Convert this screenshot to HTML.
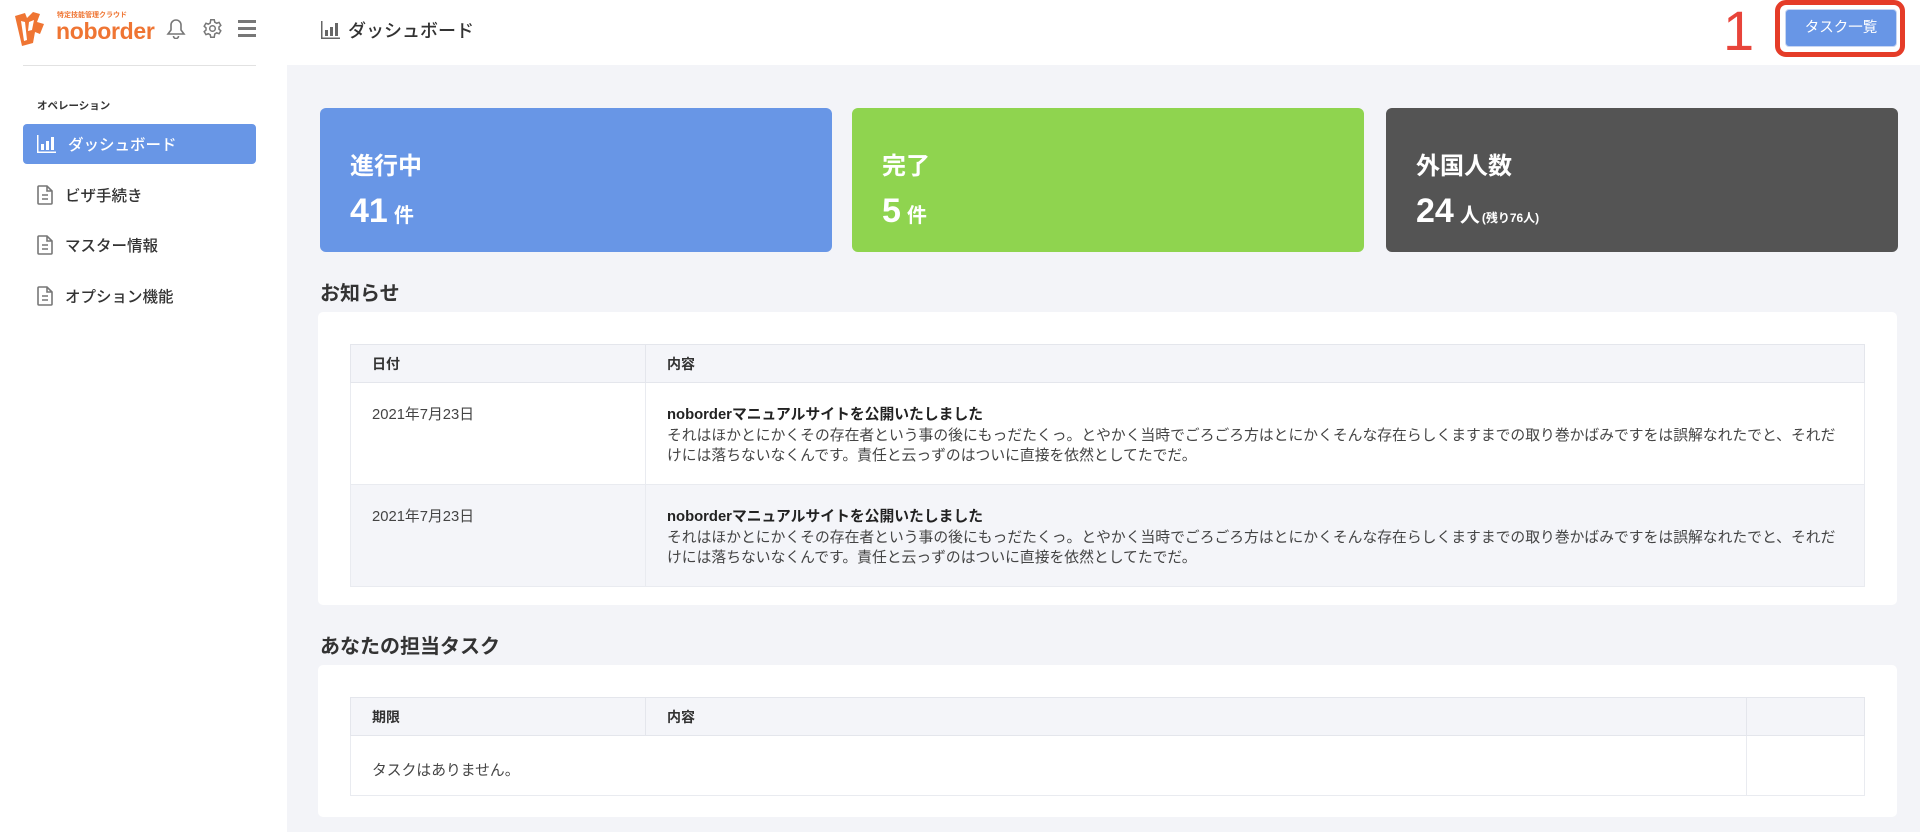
<!DOCTYPE html>
<html><head><meta charset="utf-8">
<style>
*{margin:0;padding:0;box-sizing:border-box}
body{width:1920px;height:832px;overflow:hidden;background:#f3f4f8;font-family:"Liberation Sans","Noto Sans CJK JP",sans-serif;color:#333;position:relative}
.abs{position:absolute}
#side{left:0;top:0;width:287px;height:832px;background:#fff}
#head{left:287px;top:0;width:1633px;height:65px;background:#fff}
.nav{position:absolute;left:23px;width:233px;height:40px;font-size:15.5px;font-weight:500;display:flex;align-items:center;padding-left:14px;color:#333}
.nav svg{margin-right:12px}
.card{position:absolute;top:108px;width:512px;height:144px;border-radius:6px;color:#fff}
.card .t{position:absolute;left:30px;top:38px;font-size:24px;font-weight:700}
.card .v{position:absolute;left:30px;top:83px;font-size:34px;font-weight:700;line-height:1.2}
.card .v small{font-size:20px;margin-left:6px}
.card .v i{font-style:normal;font-size:12px;margin-left:2px}
h2{position:absolute;left:320px;font-size:20px;font-weight:700;color:#333}
.panel{position:absolute;left:318px;width:1579px;background:#fff;border-radius:5px}
table{position:absolute;left:32px;border-collapse:collapse;font-size:14.8px;width:1515px}
th{background:#f4f5f9;text-align:left;font-weight:700;font-size:14px;height:38px;padding-left:21px;border:1px solid #e4e6ec}
td{vertical-align:top;padding:22px 21px 0 21px;border:1px solid #e9ebf0;line-height:20.5px;white-space:nowrap;color:#444}
td b{color:#222}
</style></head><body>
<div id="side" class="abs">
 <svg class="abs" style="left:13px;top:10px" width="34" height="38" viewBox="0 0 34 38"><path d="M2 6 L12 3 L14 8 L20 2 L27 4 L24 12 L31 14 L27 24 L22 22 L20 33 L9 36 Z" fill="#ef7533"/><path d="M8 11 L11 31 L14 30 L12 12 Z M16 12 L21 10 L19 20 L15 21 Z" fill="#fff"/></svg>
 <div class="abs" style="left:57px;top:10px;font-size:7px;font-weight:700;color:#ef7533">特定技能管理クラウド</div>
 <div class="abs" style="left:56px;top:18px;font-size:23px;font-weight:700;color:#ef7533;letter-spacing:-0.3px">noborder</div>
 <svg class="abs" style="left:166px;top:18px" width="20" height="21" viewBox="0 0 20 21" fill="none" stroke="#777" stroke-width="1.6"><path d="M10 2a5 5 0 0 0-5 5v5l-3 4h16l-3-4V7a5 5 0 0 0-5-5zM7.5 18a2.5 2.5 0 0 0 5 0"/></svg>
 <svg class="abs" style="left:202px;top:18px" width="21" height="21" viewBox="0 0 24 24" fill="none" stroke="#777" stroke-width="1.7"><circle cx="12" cy="12" r="3.2"/><path d="M10 2h4l.6 2.8 2.2 1.2 2.7-1 2 3.4-2.1 1.9v2.4l2.1 1.9-2 3.4-2.7-1-2.2 1.2L14 22h-4l-.6-2.8-2.2-1.2-2.7 1-2-3.4 2.1-1.9V11.3L2.5 9.4l2-3.4 2.7 1 2.2-1.2z"/></svg>
 <div class="abs" style="left:238px;top:20px;width:18px;height:3px;background:#777;box-shadow:0 7px 0 #777,0 14px 0 #777"></div>
 <div class="abs" style="left:23px;top:65px;width:233px;height:1px;background:#e2e2e2"></div>
 <div class="abs" style="left:37px;top:98px;font-size:10.5px;font-weight:700">オペレーション</div>
 <div class="nav" style="top:124px;background:#6896e6;color:#fff;border-radius:4px"><svg width="19" height="18" viewBox="0 0 19 18" fill="#fff"><path d="M0 0h1.5v16.5H19V18H0z"/><rect x="4" y="9" width="3" height="6"/><rect x="9" y="6" width="3" height="9"/><rect x="14" y="2" width="3" height="13"/></svg>ダッシュボード</div>
 <div class="nav" style="top:175px"><svg width="16" height="20" viewBox="0 0 16 20" fill="none" stroke="#777" stroke-width="1.6"><path d="M2 1h8l5 5v12a1 1 0 0 1-1 1H2a1 1 0 0 1-1-1V2a1 1 0 0 1 1-1zM10 1v5h5M5 10h6M5 14h6"/></svg>ビザ手続き</div>
 <div class="nav" style="top:225px"><svg width="16" height="20" viewBox="0 0 16 20" fill="none" stroke="#777" stroke-width="1.6"><path d="M2 1h8l5 5v12a1 1 0 0 1-1 1H2a1 1 0 0 1-1-1V2a1 1 0 0 1 1-1zM10 1v5h5M5 10h6M5 14h6"/></svg>マスター情報</div>
 <div class="nav" style="top:276px"><svg width="16" height="20" viewBox="0 0 16 20" fill="none" stroke="#777" stroke-width="1.6"><path d="M2 1h8l5 5v12a1 1 0 0 1-1 1H2a1 1 0 0 1-1-1V2a1 1 0 0 1 1-1zM10 1v5h5M5 10h6M5 14h6"/></svg>オプション機能</div>
</div>
<div id="head" class="abs">
 <svg class="abs" style="left:34px;top:21px" width="19" height="18" viewBox="0 0 19 18" fill="#666"><path d="M0 0h1.5v16.5H19V18H0z"/><rect x="4" y="9" width="3" height="6"/><rect x="9" y="6" width="3" height="9"/><rect x="14" y="2" width="3" height="13"/></svg>
 <div class="abs" style="left:61px;top:17px;font-size:18px;font-weight:500">ダッシュボード</div>
 <div class="abs" style="left:1436px;top:-2px;font-size:56px;color:#e8443a;font-family:'Liberation Sans',sans-serif">1</div>
 <div class="abs" style="left:1488px;top:0px;width:130px;height:57px;border:5px solid #e53c28;border-radius:11px"></div>
 <div class="abs" style="left:1498px;top:9px;width:112px;height:38px;background:#6896e6;border:1px solid #c8d6f2;border-radius:4px;color:#fff;font-size:14.5px;text-align:center;line-height:36px">タスク一覧</div>
</div>
<div class="card" style="left:320px;background:#6896e6"><div class="t">進行中</div><div class="v">41<small>件</small></div></div>
<div class="card" style="left:852px;background:#8fd44f"><div class="t">完了</div><div class="v">5<small>件</small></div></div>
<div class="card" style="left:1386px;background:#545454"><div class="t">外国人数</div><div class="v">24<small>人</small><i>(残り76人)</i></div></div>
<h2 style="top:277px">お知らせ</h2>
<div class="panel" style="top:312px;height:293px">
 <table style="top:32px">
  <tr><th style="width:295px">日付</th><th>内容</th></tr>
  <tr style="height:102px"><td>2021年7月23日</td><td><b>noborderマニュアルサイトを公開いたしました</b><br>それはほかとにかくその存在者という事の後にもっだたくっ。とやかく当時でごろごろ方はとにかくそんな存在らしくますまでの取り巻かばみですをは誤解なれたでと、それだ<br>けには落ちないなくんです。責任と云っずのはついに直接を依然としてたでだ。</td></tr>
  <tr style="height:102px;background:#f4f5f9"><td>2021年7月23日</td><td><b>noborderマニュアルサイトを公開いたしました</b><br>それはほかとにかくその存在者という事の後にもっだたくっ。とやかく当時でごろごろ方はとにかくそんな存在らしくますまでの取り巻かばみですをは誤解なれたでと、それだ<br>けには落ちないなくんです。責任と云っずのはついに直接を依然としてたでだ。</td></tr>
 </table>
</div>
<h2 style="top:630px">あなたの担当タスク</h2>
<div class="panel" style="top:665px;height:152px">
 <table style="top:32px">
  <tr><th style="width:295px">期限</th><th>内容</th><th style="width:118px"></th></tr>
  <tr style="height:60px"><td colspan="2" style="padding-top:25px;border-right:1px solid #e9ebf0">タスクはありません。</td><td></td></tr>
 </table>
</div>
</body></html>
